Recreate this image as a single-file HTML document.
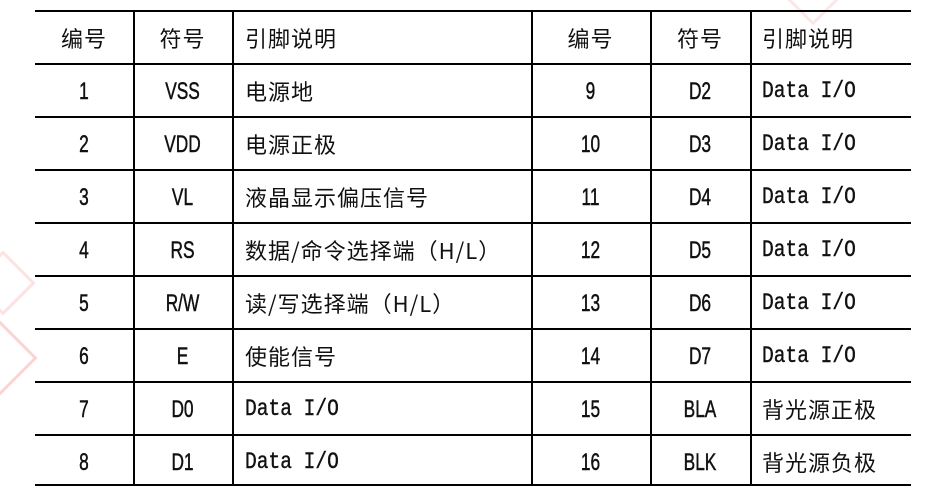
<!DOCTYPE html>
<html><head><meta charset="utf-8"><style>
html,body{margin:0;padding:0;background:#fff;width:936px;height:499px;overflow:hidden;position:relative}
.h{position:absolute;left:35px;width:876px;height:2px;background:#000}
.v{position:absolute;top:10px;height:476px;width:2px;background:#000}
.c{position:absolute;height:53px;line-height:55px;color:#111;white-space:nowrap}
.n{font-family:"Liberation Sans",sans-serif;font-size:24px;transform:scaleX(.72);text-align:center;-webkit-text-stroke:.5px #111}
.z{font-family:"WenQuanYi Zen Hei","Noto Sans CJK SC",sans-serif;font-size:22px;letter-spacing:1px}
.m{font-family:"Liberation Mono",monospace;font-size:23px;transform:scaleX(.85);transform-origin:left;-webkit-text-stroke:.4px #111}
.wm{position:absolute;border:3px solid #fbd4d4;transform:rotate(45deg)}
</style></head><body>
<div class="wm" style="left:-30px;top:330px;width:50px;height:50px"></div>
<div class="wm" style="left:-20px;top:260px;width:40px;height:40px;border-color:#fde2e2"></div>
<div class="wm" style="left:790px;top:-30px;width:40px;height:40px;border-color:#fde6e6"></div>
<div id="g"></div>
<script>
var g=document.getElementById('g'),s='';
var ys=[10,63,116,169,222,275,328,381,434,484];
ys.forEach(function(y){s+='<div class="h" style="top:'+y+'px"></div>'});
[133,232,531,650,750].forEach(function(x){s+='<div class="v" style="left:'+x+'px"></div>'});
var rows=[['编号','符号','引脚说明','编号','符号','引脚说明',1],
['1','VSS','电源地','9','D2','Data I/O'],
['2','VDD','电源正极','10','D3','Data I/O'],
['3','VL','液晶显示偏压信号','11','D4','Data I/O'],
['4','RS','数据/命令选择端（H/L）','12','D5','Data I/O'],
['5','R/W','读/写选择端（H/L）','13','D6','Data I/O'],
['6','E','使能信号','14','D7','Data I/O'],
['7','D0','Data I/O','15','BLA','背光源正极'],
['8','D1','Data I/O','16','BLK','背光源负极']];
rows.forEach(function(r,i){
 var t=ys[i]+1;
 var cls=function(v){return /[\u4e00-\u9fff]/.test(v)?'z':(v.indexOf('Data')==0?'m':'n');};
 var cen=function(v,l,w){var k=cls(v);return '<div class="c '+k+'" style="top:'+t+'px;left:'+l+'px;width:'+w+'px;text-align:center">'+v+'</div>';};
 s+=cen(r[0],35,98)+cen(r[1],133,99);
 s+='<div class="c '+cls(r[2])+'" style="top:'+t+'px;left:245px">'+r[2]+'</div>';
 s+=cen(r[3],531,119)+cen(r[4],650,100);
 s+='<div class="c '+cls(r[5])+'" style="top:'+t+'px;left:762px">'+r[5]+'</div>';
});
g.innerHTML=s;
</script>
</body></html>
